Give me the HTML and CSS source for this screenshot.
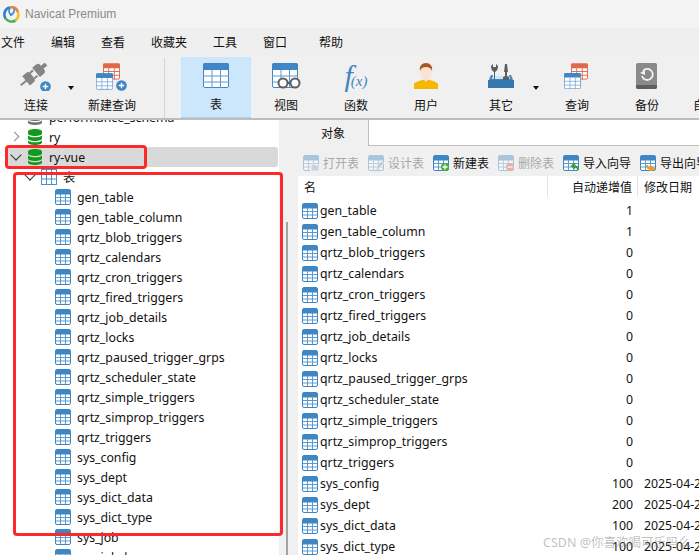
FILE: index.html
```html
<!DOCTYPE html>
<html lang="zh">
<head>
<meta charset="utf-8">
<title>Navicat Premium</title>
<link rel="stylesheet" href="styles.css">
</head>
<body>
<svg class="defs" width="0" height="0" aria-hidden="true">
  <defs>
    <symbol id="t" viewBox="0 0 16 16">
      <rect x=".5" y=".5" width="15" height="15" rx="1.5" fill="#fff" stroke="#3f87c4"/>
      <path d="M1 5V2a1 1 0 0 1 1-1h12a1 1 0 0 1 1 1v3z" fill="#3f87c4" stroke="#3f87c4"/>
      <path d="M1 8.5h14M1 12h14M5.5 5v10M10.500 5v10" stroke="#5a9ad2" fill="none"/>
    </symbol>
    <symbol id="tl" viewBox="0 0 26 25">
      <rect x=".5" y=".5" width="25" height="24" rx="1.500" fill="#fff" stroke="#3f87c4"/>
      <path d="M0 7V2a2 2 0 0 1 2-2h22a2 2 0 0 1 2 2v5z" fill="#3f87c4"/>
      <path d="M0 13h26M0 19h26M9 7v18M17.500 7v18" stroke="#5a9ad2" fill="none"/>
    </symbol>
    <symbol id="tr" viewBox="0 0 18 17">
      <rect x=".5" y=".5" width="17" height="16" rx="1" fill="#fff" stroke="#e0694a"/>
      <path d="M0 5V1a1 1 0 0 1 1-1h16a1 1 0 0 1 1 1v4z" fill="#e0694a"/>
      <path d="M0 8.500h18M0 12.500h18M6 5v12M12 5v12" stroke="#e0694a" fill="none"/>
    </symbol>
    <symbol id="db" viewBox="0 0 16 16">
      <path d="M1 2.500C1 1 4 0 8 0s7 1 7 2.500v2C15 6 12 7 8 7S1 6 1 4.500z" fill="#119a1c"/>
      <path d="M1 6.500C2.500 7.800 5 8.300 8 8.300s5.500-.5 7-1.800v3C15 11 12 12 8 12s-7-1-7-2.500z" fill="#119a1c"/>
      <path d="M1 11.500C2.500 12.800 5 13.300 8 13.300s5.500-.5 7-1.800v2C15 15 12 16 8 16s-7-1-7-2.500z" fill="#119a1c"/>
    </symbol>
    <symbol id="plus" viewBox="0 0 12 12">
      <circle cx="6" cy="6" r="5.800" fill="#3f87c4"/>
      <path d="M6 3v6M3 6h6" stroke="#fff" stroke-width="1.500"/>
    </symbol>
  </defs>
</svg>
<div class="app">
  <header class="titlebar">
    <svg class="logo" viewBox="0 0 17 17" width="17" height="17" aria-hidden="true">
      <path d="M2.500 12.500C0 8 2 2 7 1.500" fill="none" stroke="#2f7fd0" stroke-width="2.600"/>
      <path d="M7 1.500c4-1 7.500 1 8 5" fill="none" stroke="#e8873c" stroke-width="2.600"/>
      <path d="M15 6.500c1 3.500 0 6-2.500 8" fill="none" stroke="#f2c230" stroke-width="2.600"/>
      <path d="M12.500 14.500c-3.500 2-7.500 1-10-2" fill="none" stroke="#4cb04a" stroke-width="2.600"/>
      <path d="M7 2c-2 3-1 6 2 7M11 2.500c1 3-1 6-4 7" fill="none" stroke="#3b8ad8" stroke-width="1.600"/>
    </svg>
    <span class="app-name">Navicat Premium</span>
  </header>
  <nav class="menubar">
    <span>文件</span><span>编辑</span><span>查看</span><span>收藏夹</span><span>工具</span><span>窗口</span><span class="menu-last">帮助</span>
  </nav>
  <div class="toolbar">
    <div class="tool tool-conn">
      <svg class="ticon" viewBox="0 0 40 28" width="40" height="28" aria-hidden="true">
        <g transform="translate(17 12) rotate(-40)" fill="#858585">
          <path d="M-16-1h8v2h-8z"/>
          <path d="M-9-6h5a3 3 0 0 1 3 3v6a3 3 0 0 1-3 3h-5z"/>
          <path d="M-1-4.500h4v2h-4zM-1 2.500h4v2h-4z"/>
          <path d="M4-6h5a3 3 0 0 1 3 3v1h5v4h-5v1a3 3 0 0 1-3 3H4z"/>
        </g>
        <use href="#plus" x="24" y="18" width="11" height="11"/>
      </svg>
      <span>连接</span>
    </div>
    <span class="caret"></span>
    <div class="tool tool-query">
      <svg class="ticon" viewBox="0 0 32 28" width="32" height="28" aria-hidden="true">
        <use href="#tr" x="7" y="0" width="17" height="17"/>
        <use href="#tl" x="0" y="10" width="17" height="17"/>
        <use href="#plus" x="20" y="17" width="11" height="11"/>
      </svg>
      <span>新建查询</span>
    </div>
    <span class="sep"></span>
    <div class="tool is-active">
      <svg class="ticon" viewBox="0 0 26 25" width="26" height="25" aria-hidden="true"><use href="#tl"/></svg>
      <span>表</span>
    </div>
    <div class="tool">
      <svg class="ticon" viewBox="0 0 29 26" width="29" height="26" aria-hidden="true">
        <use href="#tl" width="26" height="25"/>
        <circle cx="11" cy="20" r="4.500" fill="#fff" stroke="#5f5f5f" stroke-width="2"/>
        <circle cx="23" cy="20" r="4.500" fill="#fff" stroke="#5f5f5f" stroke-width="2"/>
        <path d="M15 20h4" stroke="#5f5f5f" stroke-width="2"/>
      </svg>
      <span>视图</span>
    </div>
    <div class="tool">
      <div class="fx"><i class="fx-f">f</i><i class="fx-x">(x)</i></div>
      <span>函数</span>
    </div>
    <div class="tool">
      <svg class="ticon" viewBox="0 0 24 26" width="24" height="26" aria-hidden="true">
        <path d="M0 26v-5c1-2 5-3 8-4h8c3 1 7 2 8 4v5z" fill="#f4b800"/>
        <path d="M8 15l4 4 4-4v-3H8z" fill="#f6dccb"/>
        <ellipse cx="12" cy="8.500" rx="6" ry="8" fill="#fbe3d5"/>
        <path d="M6 8C5 3 8 0 12 0s7 3 6 8c-1-3-3-4-6-4S7 5 6 8z" fill="#a9581f"/>
      </svg>
      <span>用户</span>
    </div>
    <div class="tool tool-other">
      <svg class="ticon" viewBox="0 0 26 26" width="26" height="26" aria-hidden="true">
        <path d="M1 13h24v5H1z" fill="#cfe4f4"/>
        <path d="M3 12L1 17h24l-2-5h-2l1 4H4l1-4z" fill="#3f87c4"/>
        <path d="M0 17h26v8H0z" fill="#3476ae"/>
        <path d="M6 17V9C4 8 3 6 3 3l2-2v3h3V1l2 2c0 3-1 5-3 6v8zM17 17V9h-1l1-8h2l1 8h-1v4l2 1v3h-6v-3l2-1z" fill="#5e5e5e"/>
      </svg>
      <span>其它</span>
    </div>
    <span class="caret caret-other"></span>
    <div class="tool">
      <svg class="ticon" viewBox="0 0 26 26" width="26" height="26" aria-hidden="true">
        <use href="#tr" x="7" y="0" width="17" height="17"/>
        <use href="#tl" x="0" y="10" width="17" height="16"/>
      </svg>
      <span>查询</span>
    </div>
    <div class="tool">
      <svg class="ticon" viewBox="0 0 22 26" width="22" height="26" aria-hidden="true">
        <rect width="21" height="26" rx="2" fill="#8a8a8a"/>
        <path d="M0 22h21v2a2 2 0 0 1-2 2H2a2 2 0 0 1-2-2z" fill="#5e5e5e"/>
        <path d="M7 8a5.500 5.500 0 1 1 -1 5" fill="none" stroke="#f2f2f2" stroke-width="1.800"/>
        <path d="M4 10l5-3v5z" fill="#f2f2f2"/>
      </svg>
      <span>备份</span>
    </div>
    <div class="tool tool-cut"><div class="ticon-gap"></div><span>自动运行</span></div>
  </div>
  <main class="main">
    <aside class="tree">
      <div class="tree-row is-cut"><span class="chev"></span><svg class="dbicon db-gray" aria-hidden="true"><use href="#db"/></svg><span>performance_schema</span></div>
      <div class="tree-row"><span class="chev chev-right"></span><svg class="dbicon" aria-hidden="true"><use href="#db"/></svg><span>ry</span></div>
      <div class="tree-row is-selected"><span class="chev chev-down"></span><svg class="dbicon" aria-hidden="true"><use href="#db"/></svg><span>ry-vue</span></div>
      <div class="tree-row tree-group"><span class="chev chev-down"></span><svg class="folder" viewBox="0 0 16 16" aria-hidden="true"><rect x=".5" y=".5" width="15" height="15" fill="#fff" stroke="#4a8fcb"/><path d="M.5 5h15M.5 10h15M5.500 .5v15M10.500 .5v15" stroke="#4a8fcb" fill="none"/></svg><span>表</span></div>
      <div class="tree-row tree-leaf"><svg class="ticon16" aria-hidden="true"><use href="#t"/></svg><span>gen_table</span></div>
      <div class="tree-row tree-leaf"><svg class="ticon16" aria-hidden="true"><use href="#t"/></svg><span>gen_table_column</span></div>
      <div class="tree-row tree-leaf"><svg class="ticon16" aria-hidden="true"><use href="#t"/></svg><span>qrtz_blob_triggers</span></div>
      <div class="tree-row tree-leaf"><svg class="ticon16" aria-hidden="true"><use href="#t"/></svg><span>qrtz_calendars</span></div>
      <div class="tree-row tree-leaf"><svg class="ticon16" aria-hidden="true"><use href="#t"/></svg><span>qrtz_cron_triggers</span></div>
      <div class="tree-row tree-leaf"><svg class="ticon16" aria-hidden="true"><use href="#t"/></svg><span>qrtz_fired_triggers</span></div>
      <div class="tree-row tree-leaf"><svg class="ticon16" aria-hidden="true"><use href="#t"/></svg><span>qrtz_job_details</span></div>
      <div class="tree-row tree-leaf"><svg class="ticon16" aria-hidden="true"><use href="#t"/></svg><span>qrtz_locks</span></div>
      <div class="tree-row tree-leaf"><svg class="ticon16" aria-hidden="true"><use href="#t"/></svg><span>qrtz_paused_trigger_grps</span></div>
      <div class="tree-row tree-leaf"><svg class="ticon16" aria-hidden="true"><use href="#t"/></svg><span>qrtz_scheduler_state</span></div>
      <div class="tree-row tree-leaf"><svg class="ticon16" aria-hidden="true"><use href="#t"/></svg><span>qrtz_simple_triggers</span></div>
      <div class="tree-row tree-leaf"><svg class="ticon16" aria-hidden="true"><use href="#t"/></svg><span>qrtz_simprop_triggers</span></div>
      <div class="tree-row tree-leaf"><svg class="ticon16" aria-hidden="true"><use href="#t"/></svg><span>qrtz_triggers</span></div>
      <div class="tree-row tree-leaf"><svg class="ticon16" aria-hidden="true"><use href="#t"/></svg><span>sys_config</span></div>
      <div class="tree-row tree-leaf"><svg class="ticon16" aria-hidden="true"><use href="#t"/></svg><span>sys_dept</span></div>
      <div class="tree-row tree-leaf"><svg class="ticon16" aria-hidden="true"><use href="#t"/></svg><span>sys_dict_data</span></div>
      <div class="tree-row tree-leaf"><svg class="ticon16" aria-hidden="true"><use href="#t"/></svg><span>sys_dict_type</span></div>
      <div class="tree-row tree-leaf"><svg class="ticon16" aria-hidden="true"><use href="#t"/></svg><span>sys_job</span></div>
      <div class="tree-row tree-leaf"><svg class="ticon16" aria-hidden="true"><use href="#t"/></svg><span>sys_job_log</span></div>
    </aside>
    <div class="gutter"><div class="thumb"></div></div>
    <section class="content">
      <div class="tabs"><div class="tab">对象</div><div class="tab-fill"></div></div>
      <div class="objbar">
        <div class="objbtn is-off"><svg class="ticon16" viewBox="0 0 16 16" aria-hidden="true"><use href="#t"/><path d="M8 9h3l1 1h4v6H8z" fill="#8fa9be" stroke="#f0f0f0"/></svg><span>打开表</span></div>
        <div class="objbtn is-off"><svg class="ticon16" viewBox="0 0 16 16" aria-hidden="true"><use href="#t"/><path d="M8 15l1-4 5-5 2 2-5 5z" fill="#8f8f8f" stroke="#f0f0f0" stroke-width=".6"/></svg><span>设计表</span></div>
        <div class="objbtn"><svg class="ticon16" viewBox="0 0 16 16" aria-hidden="true"><use href="#t"/><circle cx="12" cy="12" r="4" fill="#4caf3c"/><path d="M12 9.500v5M9.500 12h5" stroke="#fff" stroke-width="1.300"/></svg><span>新建表</span></div>
        <div class="objbtn is-off"><svg class="ticon16" viewBox="0 0 16 16" aria-hidden="true"><use href="#t"/><circle cx="12" cy="12" r="4" fill="#d9534f"/><path d="M9.500 12h5" stroke="#fff" stroke-width="1.300"/></svg><span>删除表</span></div>
        <div class="objbtn"><svg class="ticon16" viewBox="0 0 16 16" aria-hidden="true"><use href="#t"/><path d="M15 15c0-3-2-4-5-4M12 8.500L9 11l3 2.500" fill="none" stroke="#3f9b3a" stroke-width="2"/></svg><span>导入向导</span></div>
        <div class="objbtn"><svg class="ticon16" viewBox="0 0 16 16" aria-hidden="true"><use href="#t"/><path d="M7 10c0 3 2 4 5 4M10 11l4 3-4 2" fill="none" stroke="#ee9a1c" stroke-width="2"/></svg><span>导出向导</span></div>
      </div>
      <div class="list">
        <div class="list-head"><div class="c-name">名</div><div class="c-val">自动递增值</div><div class="c-date">修改日期</div></div>
        <div class="list-body">
          <div class="row"><div class="c-name"><svg class="ticon16" aria-hidden="true"><use href="#t"/></svg><span>gen_table</span></div><div class="c-val">1</div><div class="c-date"></div></div>
          <div class="row"><div class="c-name"><svg class="ticon16" aria-hidden="true"><use href="#t"/></svg><span>gen_table_column</span></div><div class="c-val">1</div><div class="c-date"></div></div>
          <div class="row"><div class="c-name"><svg class="ticon16" aria-hidden="true"><use href="#t"/></svg><span>qrtz_blob_triggers</span></div><div class="c-val">0</div><div class="c-date"></div></div>
          <div class="row"><div class="c-name"><svg class="ticon16" aria-hidden="true"><use href="#t"/></svg><span>qrtz_calendars</span></div><div class="c-val">0</div><div class="c-date"></div></div>
          <div class="row"><div class="c-name"><svg class="ticon16" aria-hidden="true"><use href="#t"/></svg><span>qrtz_cron_triggers</span></div><div class="c-val">0</div><div class="c-date"></div></div>
          <div class="row"><div class="c-name"><svg class="ticon16" aria-hidden="true"><use href="#t"/></svg><span>qrtz_fired_triggers</span></div><div class="c-val">0</div><div class="c-date"></div></div>
          <div class="row"><div class="c-name"><svg class="ticon16" aria-hidden="true"><use href="#t"/></svg><span>qrtz_job_details</span></div><div class="c-val">0</div><div class="c-date"></div></div>
          <div class="row"><div class="c-name"><svg class="ticon16" aria-hidden="true"><use href="#t"/></svg><span>qrtz_locks</span></div><div class="c-val">0</div><div class="c-date"></div></div>
          <div class="row"><div class="c-name"><svg class="ticon16" aria-hidden="true"><use href="#t"/></svg><span>qrtz_paused_trigger_grps</span></div><div class="c-val">0</div><div class="c-date"></div></div>
          <div class="row"><div class="c-name"><svg class="ticon16" aria-hidden="true"><use href="#t"/></svg><span>qrtz_scheduler_state</span></div><div class="c-val">0</div><div class="c-date"></div></div>
          <div class="row"><div class="c-name"><svg class="ticon16" aria-hidden="true"><use href="#t"/></svg><span>qrtz_simple_triggers</span></div><div class="c-val">0</div><div class="c-date"></div></div>
          <div class="row"><div class="c-name"><svg class="ticon16" aria-hidden="true"><use href="#t"/></svg><span>qrtz_simprop_triggers</span></div><div class="c-val">0</div><div class="c-date"></div></div>
          <div class="row"><div class="c-name"><svg class="ticon16" aria-hidden="true"><use href="#t"/></svg><span>qrtz_triggers</span></div><div class="c-val">0</div><div class="c-date"></div></div>
          <div class="row"><div class="c-name"><svg class="ticon16" aria-hidden="true"><use href="#t"/></svg><span>sys_config</span></div><div class="c-val">100</div><div class="c-date">2025-04-21 10:00</div></div>
          <div class="row"><div class="c-name"><svg class="ticon16" aria-hidden="true"><use href="#t"/></svg><span>sys_dept</span></div><div class="c-val">200</div><div class="c-date">2025-04-21 10:00</div></div>
          <div class="row"><div class="c-name"><svg class="ticon16" aria-hidden="true"><use href="#t"/></svg><span>sys_dict_data</span></div><div class="c-val">100</div><div class="c-date">2025-04-21 10:00</div></div>
          <div class="row"><div class="c-name"><svg class="ticon16" aria-hidden="true"><use href="#t"/></svg><span>sys_dict_type</span></div><div class="c-val">100</div><div class="c-date">2025-04-21 10:00</div></div>
        </div>
      </div>
    </section>
  </main>
  <div class="mark mark-db"></div>
  <div class="mark mark-tables"></div>
  <div class="watermark">CSDN @你喜欢喝可乐吗么</div>
</div>
</body>
</html>
```
FILE: styles.css
```css
* { box-sizing: border-box; }
html, body { margin: 0; padding: 0; }
body {
  font-family: "Noto Sans", "Noto Sans CJK SC", sans-serif;
  font-size: 12px;
  color: #111;
  background: #f0f0f0;
}
.defs { position: absolute; }
.app {
  position: relative;
  width: 699px;
  height: 555px;
  overflow: hidden;
  display: flex;
  flex-direction: column;
}
.titlebar {
  height: 28px;
  flex: none;
  display: flex;
  align-items: center;
  gap: 5px;
  padding-left: 3px;
  background: #f3f3f3;
}
.app-name { color: #8a8a8a; font-family: "Liberation Sans", sans-serif; font-size: 12px; }
.menubar {
  height: 28px;
  flex: none;
  display: flex;
  align-items: center;
  gap: 26px;
  padding-left: 1px;
  background: #efefef;
}
.menu-last { margin-left: 6px; }
.toolbar {
  height: 64px;
  flex: none;
  display: flex;
  padding-top: 1px;
  background: #f0f0f0;
  border-bottom: 2px solid #bdbdbd;
}
.tool {
  width: 70px;
  height: 61px;
  flex: none;
  display: flex;
  flex-direction: column;
  align-items: center;
  padding-top: 6px;
  white-space: nowrap;
}
.tool > span { margin-top: auto; margin-bottom: 4px; line-height: 16px; }
.ticon { display: block; }
.ticon-gap { height: 26px; }
.tool-conn { width: 56px; margin-left: 8px; }
.tool-query { width: 68px; }
.tool-other { margin-left: 5px; }
.tool-cut { align-items: flex-start; padding-left: 11px; }
.caret {
  width: 14px;
  flex: none;
  position: relative;
}
.caret::after {
  content: "";
  position: absolute;
  left: 4px;
  top: 29px;
  border: 3.500px solid transparent;
  border-top: 4px solid #111;
  border-bottom: 0;
}
.caret-other { width: 6px; }
.caret-other::after { left: -3px; }
.sep { width: 1px; height: 60px; flex: none; margin: 1px 16px 0 18px; background: #d4d4d4; }
.is-active { background: #cce6fb; border-bottom: 1px solid #a9d2f2; }
.fx { height: 26px; font-family: "Liberation Serif", serif; color: #3f87c4; font-style: italic; display: flex; align-items: baseline; }
.fx i { display: block; }
.fx-f { font-size: 30px; line-height: 26px; }
.fx-x { font-size: 15px; margin-left: -2px; }
.main { flex: 1; min-height: 0; display: flex; }
.tree {
  width: 279px;
  flex: none;
  overflow: hidden;
  background: #fff;
  padding-top: 0;
}
.tree-row {
  height: 20px;
  display: flex;
  align-items: center;
  gap: 6px;
  padding-left: 10px;
  white-space: nowrap;
  font-size: 12.300px;
}
.is-cut { margin-top: -13px; }
.chev { width: 10px; height: 10px; flex: none; position: relative; margin-right: 1px; }
.chev-right::after, .chev-down::after {
  content: "";
  position: absolute;
  left: 1px;
  top: 1px;
  width: 6px;
  height: 6px;
  border-right: 1.500px solid #8a8a8a;
  border-top: 1.500px solid #8a8a8a;
  transform: rotate(45deg);
}
.chev-down::after {
  border-color: #333;
  left: 2px;
  top: -1px;
  width: 7px;
  height: 7px;
  transform: rotate(135deg);
}
.dbicon { width: 16px; height: 16px; flex: none; }
.db-gray { filter: grayscale(1); }
.is-selected { background: #d9d9d9; border-radius: 3px; margin: 0 1px 0 5px; padding-left: 5px; }
.tree-group { padding-left: 24px; gap: 6px; }
.tree-group .chev { margin-right: 1px; }
.folder { width: 16px; height: 16px; flex: none; }
.tree-leaf { padding-left: 55px; }
.ticon16 { width: 16px; height: 16px; flex: none; display: block; }
.gutter { width: 19px; flex: none; padding: 102px 0 0 7px; display: flex; }
.thumb { width: 2px; background: #a3a3a3; }
.content { flex: 1; min-width: 0; display: flex; flex-direction: column; }
.tabs { height: 26px; flex: none; display: flex; }
.tab { width: 70px; display: flex; align-items: center; justify-content: center; }
.tab-fill { flex: 1; background: #fff; border-left: 1px solid #bdbdbd; border-bottom: 1px solid #bdbdbd; }
.objbar {
  height: 30px;
  flex: none;
  display: flex;
  align-items: center;
  gap: 9px;
  padding: 4px 0 0 5px;
  white-space: nowrap;
}
.objbtn { display: flex; align-items: center; gap: 4px; }
.is-off { color: #a8a8a8; }
.is-off svg { opacity: .4; }
.list { flex: 1; min-height: 0; background: #fff; overflow: hidden; }
.list-head { height: 21px; display: flex; align-items: center; }
.list-head > div { height: 100%; display: flex; align-items: center; }
.list-head .c-name { padding-left: 6px; }
.list-head .c-val { justify-content: flex-end; border-left: 1px solid #e4e4e4; border-right: 1px solid #e4e4e4; }
.list-body { padding-top: 3px; }
.row { height: 21px; display: flex; align-items: center; white-space: nowrap; font-size: 12.300px; }
.c-name { width: 249px; flex: none; display: flex; align-items: center; gap: 2px; padding-left: 4px; }
.c-val { width: 91px; flex: none; text-align: right; padding-right: 5px; }
.c-date { flex: none; width: 61px; padding-left: 6px; overflow: hidden; }
.mark { position: absolute; border: 3px solid #fb2a2a; border-radius: 4px; pointer-events: none; }
.mark-db { left: 5px; top: 145px; width: 142px; height: 24px; }
.mark-tables { left: 13px; top: 172px; width: 270px; height: 364px; }
.watermark {
  position: absolute;
  left: 543px;
  top: 532px;
  font-size: 12.500px;
  color: rgba(130, 130, 130, .5);
  white-space: nowrap;
}
```
